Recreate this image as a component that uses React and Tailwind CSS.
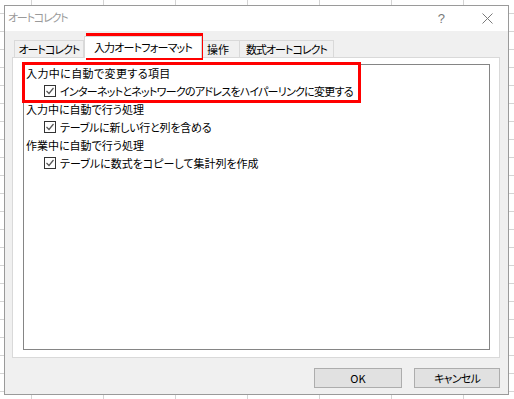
import React from "react"

const jp = "font-['Noto_Sans_CJK_JP','Noto_Sans',sans-serif]"

function CheckRow({ label, track = "" }) {
  return (
    <div className="flex items-center h-[18px] pl-[18px]">
      <span className="w-[12px] h-[12px] border border-[#333] bg-white flex items-center justify-center shrink-0">
        <svg width="10" height="10" viewBox="0 0 10 10">
          <path d="M1.5 5 L4 7.5 L8.5 2" fill="none" stroke="#555" strokeWidth="1.2" />
        </svg>
      </span>
      <span className={`ml-[4px] whitespace-nowrap [font-feature-settings:'palt'] ${track}`}>{label}</span>
    </div>
  )
}

function Tab({ children, className }) {
  return (
    <div
      className={`h-[17px] border border-b-0 border-[#d9d9d9] bg-[#f0f0f0] flex items-center justify-center whitespace-nowrap text-[11px] tracking-[-1px] [font-feature-settings:'palt'] ${className}`}
    >
      {children}
    </div>
  )
}

export default function App() {
  return (
    <div
      className={`relative w-[514px] h-[399px] overflow-hidden bg-white bg-[linear-gradient(to_right,#d4d4d4_1px,transparent_1px),linear-gradient(to_bottom,#d4d4d4_1px,transparent_1px)] bg-[length:72px_18px] bg-[position:31px_13px] pt-[5px] pl-[4px] text-[#000] ${jp}`}
    >
      <div className="w-[505px] h-[390px] border border-[#9a9a9a] bg-[#f0f0f0] flex flex-col">
        {/* title bar */}
        <div className="h-[25px] bg-white flex items-center shrink-0 text-[#9a9a9a]">
          <span className="pl-[3px] text-[11px] tracking-[-1.2px] -mt-[2px] [font-feature-settings:'palt']">オートコレクト</span>
          <span className="ml-auto text-[13px] font-['Liberation_Sans',sans-serif] mr-[37px] text-[#7a7a7a]">?</span>
          <svg width="11" height="11" viewBox="0 0 11 11" className="mr-[15px]">
            <path d="M0.5 0.5 L10.5 10.5 M10.5 0.5 L0.5 10.5" stroke="#7a7a7a" strokeWidth="1" />
          </svg>
        </div>

        {/* tabs */}
        <div className="flex items-end h-[26px] pl-[9px] shrink-0">
          <Tab className="w-[70px]">オートコレクト</Tab>
          <div className="w-[118px] h-[22px] border border-b-0 border-[#d9d9d9] bg-white flex items-center justify-center whitespace-nowrap text-[11px] tracking-[-0.8px] [font-feature-settings:'palt'] relative z-10 -mb-px">
            入力オートフォーマット
          </div>
          <Tab className="w-[38px] border-l-0 justify-start pl-[5px] tracking-normal">操作</Tab>
          <Tab className="w-[94px] border-l-0">数式オートコレクト</Tab>
        </div>

        {/* tab panel */}
        <div className="ml-[7px] mr-[8px] h-[301px] border border-[#d9d9d9] bg-white pt-[6px] pl-[10px] pr-[9px] pb-[7px]">
          <div className="h-full border border-[#858585] pl-[2px] text-[11px] leading-[18px]">
            <div className="h-[18px] -mt-px tracking-[0.4px] [font-feature-settings:'palt']">入力中に自動で変更する項目</div>
            <CheckRow label="インターネットとネットワークのアドレスをハイパーリンクに変更する" track="tracking-[-0.75px]" />
            <div className="h-[18px] [font-feature-settings:'palt']">入力中に自動で行う処理</div>
            <CheckRow label="テーブルに新しい行と列を含める" track="tracking-[-0.25px]" />
            <div className="h-[18px] [font-feature-settings:'palt']">作業中に自動で行う処理</div>
            <CheckRow label="テーブルに数式をコピーして集計列を作成" />
          </div>
        </div>

        {/* buttons */}
        <div className="flex justify-end gap-[12px] mt-[10px] pr-[8px]">
          <button className="w-[88px] h-[20px] border border-[#adadad] bg-[#e1e1e1] text-[11px] leading-none">OK</button>
          <button className="w-[86px] h-[20px] border border-[#adadad] bg-[#e1e1e1] text-[11px] leading-none tracking-[-0.8px] [font-feature-settings:'palt']">キャンセル</button>
        </div>
      </div>

      {/* red annotation boxes */}
      <div className="absolute left-[86px] top-[33px] w-[117px] h-[27px] border-[3px] border-[#ff0000] pointer-events-none" />
      <div className="absolute left-[22px] top-[62px] w-[339px] h-[41px] border-[3px] border-[#ff0000] pointer-events-none" />
    </div>
  )
}
